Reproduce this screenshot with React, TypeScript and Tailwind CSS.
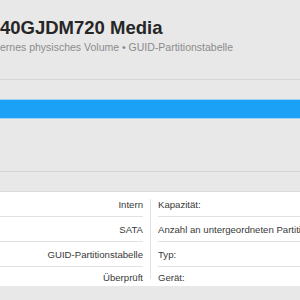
const leftRows = ["Intern", "SATA", "GUID-Partitionstabelle", "Überprüft"];
const rightRows = ["Kapazität:", "Anzahl an untergeordneten Partitionen:", "Typ:", "Gerät:"];

export default function App() {
  return (
    <div className="h-[300px] w-[300px] overflow-hidden bg-[#e8e8e8] font-['Liberation_Sans',Arial,sans-serif]">
      <div className="h-[80px] border-b border-[#d6d6d6] pt-[17px]">
        <h1 className="whitespace-nowrap text-[18.5px] leading-[22px] font-bold text-[#262626]">
          40GJDM720 Media
        </h1>
        <p className="mt-[1px] whitespace-nowrap text-[10.5px] leading-[14px] text-[#8b8b8b]">
          ernes physisches Volume • GUID-Partitionstabelle
        </p>
      </div>

      <div className="h-[92px] border-b border-[#d4d4d4] pt-[19px]">
        <div className="h-[20px] border-y border-[#9fd3f6] bg-[#1ba2f6]" />
      </div>

      <div className="pt-[19px]">
        <div className="flex h-[95px] border-t border-[#dcdcdc] bg-white text-[9.6px] text-[#3a3a3a]">
          <div className="w-[143px] shrink-0">
            {leftRows.map((t, i) => (
              <div
                key={t}
                className={
                  i < 3
                    ? "flex h-[25px] items-center justify-end border-b border-[#e2e2e2] pt-[2px] whitespace-nowrap"
                    : "flex h-[21px] items-center justify-end pt-[2px] whitespace-nowrap"
                }
              >
                {t}
              </div>
            ))}
          </div>
          <div className="flex w-[15px] shrink-0 justify-center py-[7px]">
            <div className="w-px bg-[#e2e2e2]" />
          </div>
          <div className="min-w-0 flex-1 overflow-hidden">
            {rightRows.map((t, i) => (
              <div
                key={t}
                className={
                  i < 3
                    ? "flex h-[25px] items-center border-b border-[#e2e2e2] pt-[2px] whitespace-nowrap"
                    : "flex h-[21px] items-center pt-[2px] whitespace-nowrap"
                }
              >
                {t}
              </div>
            ))}
          </div>
        </div>
      </div>
    </div>
  );
}
